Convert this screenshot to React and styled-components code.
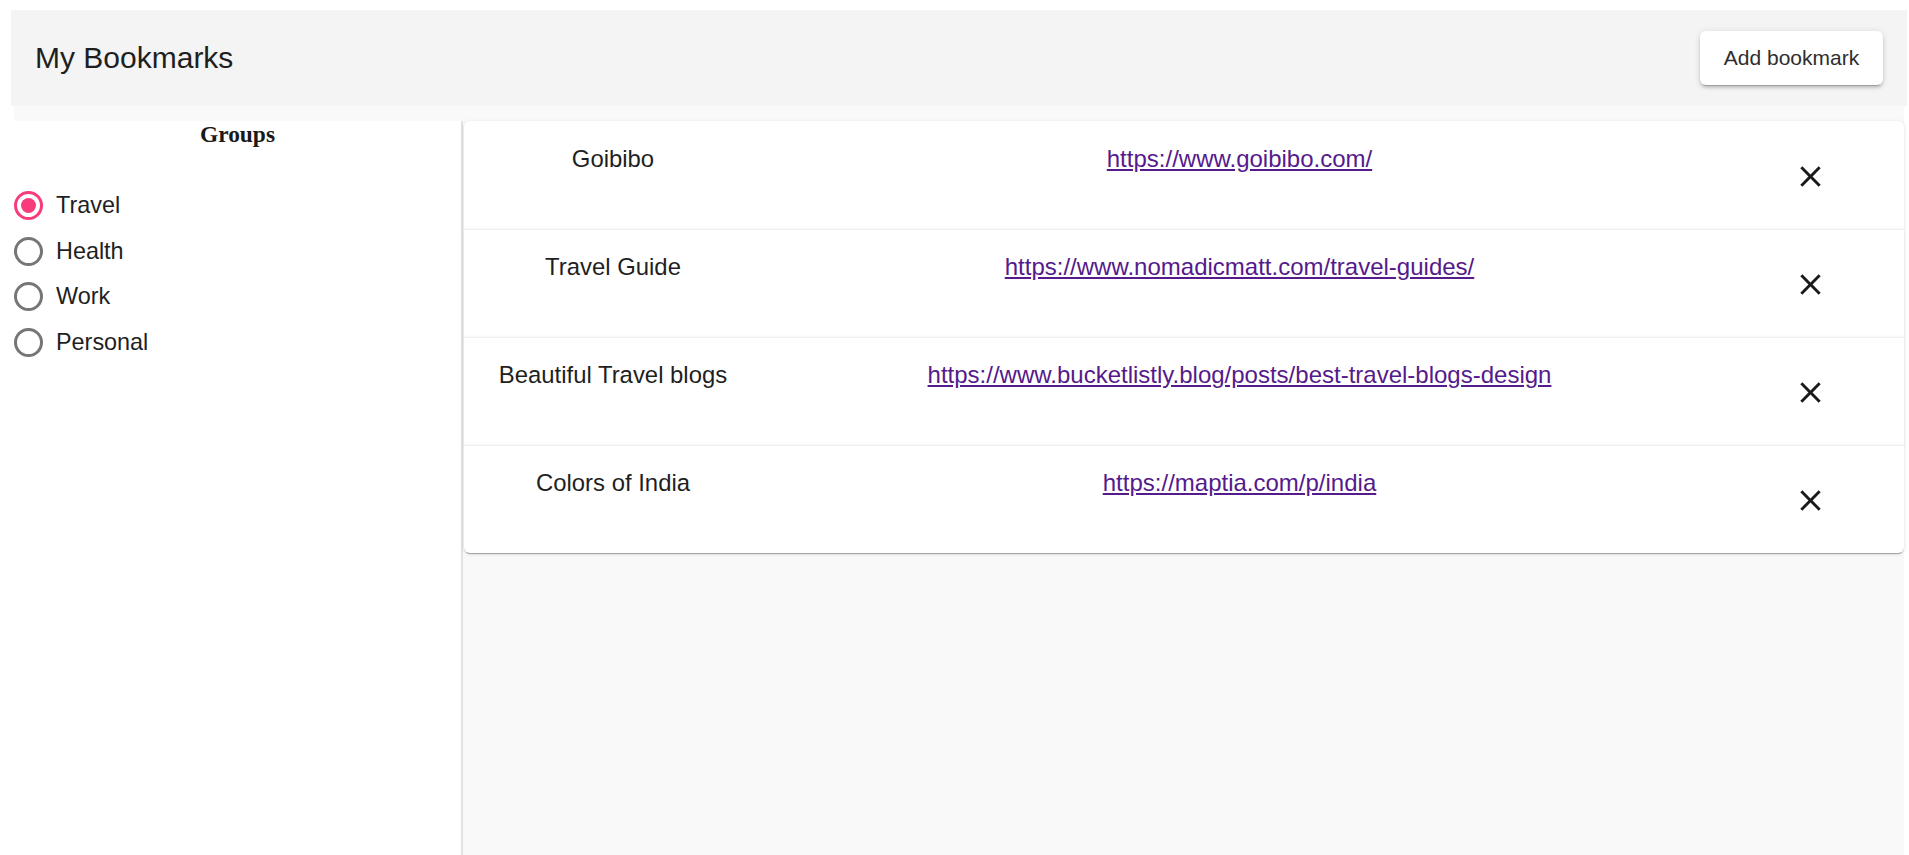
import React, { useState } from "react";
import styled, { createGlobalStyle } from "styled-components";

const GlobalStyle = createGlobalStyle`
  html, body { margin: 0; padding: 0; background: #ffffff; }
  body { font-family: "Liberation Sans", Arial, sans-serif; color: #212121; }
  * { box-sizing: border-box; }
`;

const Page = styled.div`
  height: 100vh;
  display: flex;
  flex-direction: column;
  padding: 10px 2px 0 11px;
  overflow: hidden;
`;

const Header = styled.header`
  height: 96px;
  flex: none;
  background: #f4f4f4;
  display: flex;
  align-items: center;
  justify-content: space-between;
  padding: 0 24px 0 24px;
`;

const Title = styled.h1`
  margin: 0;
  font-family: "Liberation Sans", Arial, sans-serif;
  font-weight: 400;
  font-size: 30px;
  color: #1f1f1f;
`;

const AddButton = styled.button`
  width: 183px;
  height: 54px;
  border: none;
  border-radius: 6px;
  background: #ffffff;
  font-family: "Liberation Sans", Arial, sans-serif;
  font-size: 21px;
  color: #2e2e2e;
  cursor: pointer;
  box-shadow: 0px 4px 1px -3px rgba(0, 0, 0, 0.2), 0px 3px 3px 0px rgba(0, 0, 0, 0.14),
    0px 1px 7px 0px rgba(0, 0, 0, 0.12);
`;

const Body = styled.div`
  flex: 1;
  margin: 0 3px 0 3px;
  padding-top: 15px;
  background: #f9f9f9;
  display: grid;
  grid-template-columns: 449px 1fr;
  min-height: 0;
`;

const Sidebar = styled.aside`
  background: #ffffff;
  border-right: 2px solid #e2e2e2;
`;

const GroupsHeading = styled.h3`
  margin: 0;
  text-align: center;
  font-family: "Liberation Serif", "Times New Roman", serif;
  font-weight: 700;
  font-size: 23.4px;
  color: #1a1a1a;
`;

const RadioList = styled.div`
  margin-top: 35px;
  display: flex;
  flex-direction: column;
`;

const RadioRow = styled.label`
  height: 45.6px;
  display: flex;
  align-items: center;
  gap: 13px;
  cursor: pointer;
  font-size: 23.4px;
  color: #1f1f1f;
`;

const RadioCircle = styled.span`
  width: 29px;
  height: 29px;
  border-radius: 50%;
  border: 3px solid ${(p) => (p.$checked ? "#f73b7c" : "#767676")};
  display: flex;
  align-items: center;
  justify-content: center;
  flex: none;
  &::after {
    content: "";
    width: 15px;
    height: 15px;
    border-radius: 50%;
    background: #f73b7c;
    display: ${(p) => (p.$checked ? "block" : "none")};
  }
`;

const Main = styled.main`
  padding-left: 1px;
`;

const Card = styled.div`
  height: 108px;
  background: #ffffff;
  display: grid;
  grid-template-columns: 298px 955px 1fr;
  align-items: start;
  padding-top: ${(p) => (p.$first ? "24px" : "23px")};
  border-top: ${(p) => (p.$first ? "none" : "1px solid #f1f1f1")};
  border-radius: ${(p) => (p.$first ? "6px 6px 0 0" : p.$last ? "0 0 6px 6px" : "0")};
  box-shadow: 0px 3px 1px -2px rgba(0, 0, 0, 0.2), 0px 1px 1px 0px rgba(0, 0, 0, 0.14),
    0px 1px 4px 0px rgba(0, 0, 0, 0.12);
`;

const CardTitle = styled.div`
  text-align: center;
  font-size: 23.9px;
  color: #1f1f1f;
`;

const LinkCell = styled.div`
  text-align: center;
  font-size: 24px;
`;

const BookmarkLink = styled.a`
  color: #551a8b;
  text-decoration: underline;
`;

const CloseButton = styled.button`
  justify-self: center;
  margin-top: 14px;
  width: 35px;
  height: 35px;
  padding: 0;
  border: none;
  background: transparent;
  color: #1a1a1a;
  cursor: pointer;
  display: flex;
  align-items: center;
  justify-content: center;
`;

const CloseIcon = () => (
  <svg width="35" height="35" viewBox="0 0 24 24" fill="currentColor">
    <path d="M19 6.41L17.59 5 12 10.59 6.41 5 5 6.41 10.59 12 5 17.59 6.41 19 12 13.41 17.59 19 19 17.59 13.41 12z" />
  </svg>
);

const groups = ["Travel", "Health", "Work", "Personal"];

const bookmarks = [
  { title: "Goibibo", url: "https://www.goibibo.com/" },
  { title: "Travel Guide", url: "https://www.nomadicmatt.com/travel-guides/" },
  { title: "Beautiful Travel blogs", url: "https://www.bucketlistly.blog/posts/best-travel-blogs-design" },
  { title: "Colors of India", url: "https://maptia.com/p/india" },
];

export default function App() {
  const [group, setGroup] = useState("Travel");
  return (
    <>
      <GlobalStyle />
      <Page>
        <Header>
          <Title>My Bookmarks</Title>
          <AddButton>Add bookmark</AddButton>
        </Header>
        <Body>
          <Sidebar>
            <GroupsHeading>Groups</GroupsHeading>
            <RadioList>
              {groups.map((g) => (
                <RadioRow key={g} onClick={() => setGroup(g)}>
                  <RadioCircle $checked={group === g} />
                  {g}
                </RadioRow>
              ))}
            </RadioList>
          </Sidebar>
          <Main>
            {bookmarks.map((b, i) => (
              <Card key={b.url} $first={i === 0} $last={i === bookmarks.length - 1}>
                <CardTitle>{b.title}</CardTitle>
                <LinkCell>
                  <BookmarkLink href={b.url} onClick={(e) => e.preventDefault()}>
                    {b.url}
                  </BookmarkLink>
                </LinkCell>
                <CloseButton aria-label="delete">
                  <CloseIcon />
                </CloseButton>
              </Card>
            ))}
          </Main>
        </Body>
      </Page>
    </>
  );
}
